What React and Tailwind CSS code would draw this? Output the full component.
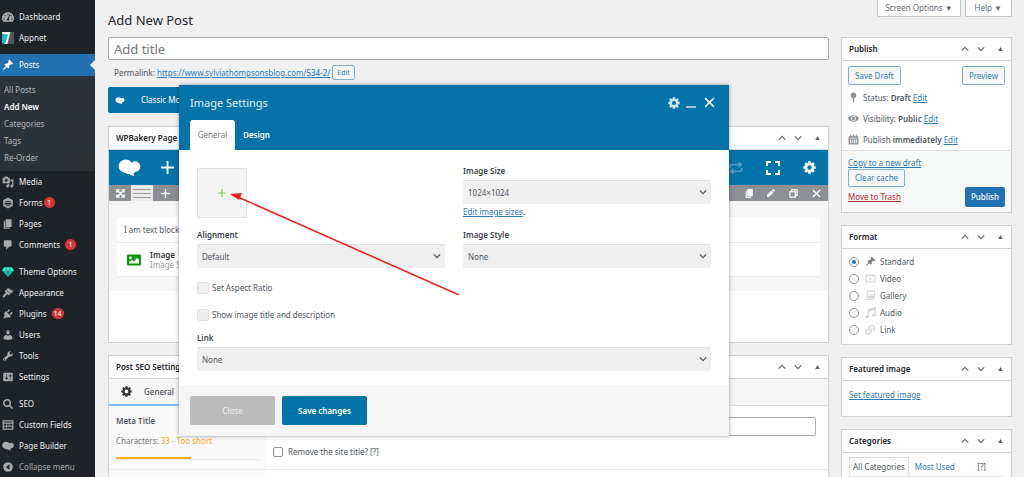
import React, { useState } from 'react';
import { FaTachometerAlt, FaLink, FaMusic, FaPen, FaSearch } from 'react-icons/fa';

const ICONS = {
  pin: 'M10.44 3.02l1.82-1.82 6.36 6.35-1.83 1.82c-1.05-.68-2.48-.57-3.41.36l-.75.75c-.92.93-1.04 2.35-.35 3.41l-1.83 1.82-2.41-2.41-2.8 2.79c-.42.42-3.38 2.71-3.8 2.29s1.86-3.39 2.28-3.81l2.79-2.79L4.1 9.36l1.83-1.82c1.05.69 2.48.57 3.4-.36l.75-.75c.93-.92 1.05-2.35.36-3.41z',
  media: 'M13 11V4c0-.55-.45-1-1-1h-1.67L9 1H5L3.67 3H2c-.55 0-1 .45-1 1v7c0 .55.45 1 1 1h10c.55 0 1-.45 1-1zM7 4.5c1.38 0 2.5 1.12 2.5 2.5S8.38 9.5 7 9.5 4.5 8.38 4.5 7 5.62 4.5 7 4.5zM14 6h5v10.5c0 1.38-1.12 2.5-2.5 2.5S14 17.88 14 16.5s1.12-2.5 2.5-2.5c.17 0 .34.02.5.05V9h-3V6zm-4 8.05V13h2v3.5c0 1.38-1.12 2.5-2.5 2.5S7 17.88 7 16.5 8.12 14 9.5 14c.17 0 .34.02.5.05z',
  forms: 'M10 1l8 4.5v9L10 19l-8-4.5v-9zM6 6.5h8L15 8H5zM4.5 9.5v3h11v-3zM6 14l1 1.5h6l1-1.5z',
  pages: 'M6 15V2h10v13H6zm-1 1h8v2H3V5h2v11z',
  comments: 'M5 2h9c1.1 0 2 .9 2 2v7c0 1.1-.9 2-2 2h-2l-5 5v-5H5c-1.1 0-2-.9-2-2V4c0-1.1.9-2 2-2z',
  appearance: 'M14.48 11.06L7.41 3.99l1.5-1.5c.5-.56 2.3-.47 3.51.32 1.21.8 1.43 1.28 2.91 2.1 1.18.64 2.45 1.26 4.45.85zm-.71.71L6.7 4.7 4.93 6.47c-.39.39-.39 1.02 0 1.41l1.06 1.06c.39.39.39 1.03 0 1.42-.6.6-1.43 1.11-2.21 1.69-.35.26-.7.53-1.01.84C1.43 14.23.4 16.08 1.4 17.07c.99 1 2.84-.03 4.18-1.36.31-.31.58-.66.85-1.02.57-.78 1.08-1.61 1.69-2.21.39-.39 1.02-.39 1.41 0l1.06 1.06c.39.39 1.02.39 1.41 0z',
  plugins: 'M13.11 4.36L9.87 7.6 8 5.73l3.24-3.24c.35-.34 1.05-.2 1.56.32.52.51.66 1.21.31 1.55zm-8 1.77l.91-1.12 9.01 9.01-1.19.84c-.71.71-2.63 1.16-3.82 1.16H6.14L4.9 17.26c-.59.59-1.54.59-2.12 0-.59-.58-.59-1.53 0-2.12L4 13.88V10.1c0-1.18.4-3.26 1.11-3.97zm7.26 3.97l3.24-3.24c.34-.35 1.04-.21 1.55.31.52.51.66 1.21.31 1.55l-3.24 3.25z',
  users: 'M10 9.25c-2.27 0-2.73-3.44-2.73-3.44C7 4.02 7.82 2 9.97 2c2.16 0 2.98 2.02 2.71 3.81 0 0-.41 3.44-2.68 3.44zm0 2.57L12.72 10c2.39 0 4.52 2.33 4.52 4.53v2.49s-3.65 1.13-7.24 1.13c-3.65 0-7.24-1.13-7.24-1.13v-2.49c0-2.25 1.94-4.48 4.47-4.48z',
  tools: 'M16.68 9.77c-1.34 1.34-3.3 1.67-4.95.99l-5.41 6.52c-.99.99-2.59.99-3.58 0s-.99-2.59 0-3.57l6.52-5.42c-.68-1.65-.35-3.61.99-4.95 1.28-1.28 3.12-1.62 4.72-1.06l-2.89 2.89 2.82 2.82 2.86-2.87c.53 1.58.18 3.39-1.08 4.65zM3.81 16.21c.4.39 1.04.39 1.43 0 .4-.4.4-1.04 0-1.43-.39-.4-1.03-.4-1.43 0-.39.39-.39 1.03 0 1.43z',
  settings: 'M18 16V4c0-.55-.45-1-1-1H3c-.55 0-1 .45-1 1v12c0 .55.45 1 1 1h14c.55 0 1-.45 1-1zM8 11h1c.55 0 1 .45 1 1s-.45 1-1 1H8v1.5c0 .28-.22.5-.5.5s-.5-.22-.5-.5V13H6c-.55 0-1-.45-1-1s.45-1 1-1h1V5.5c0-.28.22-.5.5-.5s.5.22.5.5V11zm5-2h-1c-.55 0-1-.45-1-1s.45-1 1-1h1V5.5c0-.28.22-.5.5-.5s.5.22.5.5V7h1c.55 0 1 .45 1 1s-.45 1-1 1h-1v5.5c0 .28-.22.5-.5.5s-.5-.22-.5-.5V9z',
  fields: 'M1 2h18v16H1zM3 4v2h14V4zM3 8v3h4V8zM8 8v3h4V8zM13 8v3h4V8zM3 13v3h4v-3zM8 13v3h9v-3z',
  collapse: 'M10 2a8 8 0 1 0 0 16 8 8 0 0 0 0-16zM12.5 5.5v9L6.5 10z',
  video: 'M1 3h18v14H1zM3 6v9h14V6zM8 7.5l5 3-5 3z',
  gallery: 'M4 1h14v14H4zM6 3v8h10V3zM2 5h1v11h13v2H2zM7 10l2-4 2 2 2-1 2 3z',
  eye: 'M10 4C5 4 2 7 0 10c2 3 5 6 10 6s8-3 10-6c-2-3-5-6-10-6zM10 5.5a4.5 4.5 0 1 1 0 9 4.5 4.5 0 0 1 0-9zM10 7a3 3 0 1 0 0 6 3 3 0 0 0 0-6z',
  calendar: 'M1 4h3V1h2v3h3V1h2v3h3V1h2v3h3v15H1zM3 7v1h14V7zM4 10v7h2v-7zM8 10v7h1.5v-7zM11 10v7h1.5v-7zM14 10v7h2v-7z',
  marker: 'M10 1a5 5 0 0 1 1.5 9.8L11 19H9l-.5-8.2A5 5 0 0 1 10 1z',
  image: 'M2 2h16a2 2 0 0 1 2 2v12a2 2 0 0 1-2 2H2a2 2 0 0 1-2-2V4a2 2 0 0 1 2-2zM5 5a2 2 0 1 0 0 4 2 2 0 0 0 0-4zM3 15h14V9l-3-2-4 5-3-2-4 3z',
};

const Icon = ({ name, className = 'size-3' }) => (
  <svg viewBox="0 0 20 20" fill="currentColor" fillRule="evenodd" className={`shrink-0 ${className}`} aria-hidden="true">
    <path d={ICONS[name]} />
  </svg>
);

const Gear = ({ className }) => (
  <svg viewBox="0 0 20 20" fill="none" stroke="currentColor" className={className} aria-hidden="true">
    <circle cx="10" cy="10" r="5.5" strokeWidth="4" />
    {[0, 45, 90, 135].map(a => (
      <path key={a} d="M10 .5v3M10 16.5v3" strokeWidth="4" transform={`rotate(${a} 10 10)`} />
    ))}
  </svg>
);

const Cloud = ({ className }) => (
  <svg viewBox="0 0 24 18" fill="currentColor" className={`shrink-0 ${className}`} aria-hidden="true">
    <ellipse cx="8" cy="7.5" rx="7.5" ry="7" />
    <circle cx="18" cy="8" r="5.5" />
    <path d="M5 12h14c-1 2.5-2 3.5-3 3.5l1 2.5c-2 0-4-1-5-2-3 .5-6-1-7-4z" />
  </svg>
);

const Gem = () => (
  <svg viewBox="0 0 24 20" className="h-3 w-3 shrink-0" aria-hidden="true">
    <path fill="#1abc9c" d="M5 0h14l5 7-12 13L0 7z" />
    <path fill="#3fe0c5" d="M5 0l3 7H0zM12 0l4 7H8zM19 0l5 7h-8z" />
    <path fill="#12a085" d="M8 7h8l-4 13z" />
  </svg>
);

const AppnetLogo = () => (
  <svg viewBox="0 0 20 20" className="size-3 shrink-0" aria-hidden="true">
    <path fill="#50575e" d="M8 0h12v20H8z" />
    <path fill="#fff" d="M0 0h14L9 20H4z" />
    <path fill="#22b8c0" d="M0 3l10 1-4 14-6 2z" />
  </svg>
);

const Chevron = ({ up, className = 'size-2' }) => (
  <svg viewBox="0 0 10 10" fill="none" stroke="currentColor" strokeWidth="1.6" className={`shrink-0 ${className}`} aria-hidden="true">
    <path d={up ? 'M1 7l4-4 4 4' : 'M1 3l4 4 4-4'} />
  </svg>
);

const Plus = ({ className }) => (
  <svg viewBox="0 0 14 14" stroke="currentColor" className={className} aria-hidden="true">
    <path d="M7 0v14M0 7h14" strokeWidth="2" />
  </svg>
);

const Cross = ({ className }) => (
  <svg viewBox="0 0 10 10" stroke="currentColor" strokeWidth="1.6" className={className} aria-hidden="true">
    <path d="M1 1l8 8M9 1l-8 8" />
  </svg>
);

const MENU = [
  [
    { label: 'Dashboard', icon: <FaTachometerAlt className="size-3 shrink-0" /> },
    { label: 'Appnet', icon: <AppnetLogo /> },
  ],
  [
    { label: 'Media', icon: <Icon name="media" /> },
    { label: 'Forms', icon: <Icon name="forms" />, count: 1, tight: true },
    { label: 'Pages', icon: <Icon name="pages" /> },
    { label: 'Comments', icon: <Icon name="comments" />, count: 1 },
  ],
  [
    { label: 'Theme Options', icon: <Gem /> },
    { label: 'Appearance', icon: <Icon name="appearance" /> },
    { label: 'Plugins', icon: <Icon name="plugins" />, count: 14 },
    { label: 'Users', icon: <Icon name="users" /> },
    { label: 'Tools', icon: <Icon name="tools" /> },
    { label: 'Settings', icon: <Icon name="settings" /> },
  ],
  [
    { label: 'SEO', icon: <FaSearch className="mx-px size-[10px] shrink-0" /> },
    { label: 'Custom Fields', icon: <Icon name="fields" /> },
    { label: 'Page Builder', icon: <Cloud className="h-[10px] w-3" /> },
  ],
];

const SUBMENU = ['All Posts', 'Add New', 'Categories', 'Tags', 'Re-Order'];

const MenuGroup = ({ items }) => items.map(item => (
  <li key={item.label}>
    <a href="#" className="flex h-[21px] items-center gap-[5px] pl-[2px] text-[#f0f0f1]">
      <span className="flex text-[#a7aaad]">{item.icon}</span>
      {item.label}
      {item.count && (
        <span className={`flex h-[11px] min-w-[11px] items-center justify-center rounded-full bg-[#d63638] px-[2px] text-[7px] leading-none text-white ${item.tight ? '-ml-1' : ''}`}>
          {item.count}
        </span>
      )}
    </a>
  </li>
));

const Sidebar = () => (
  <nav className="w-[95px] shrink-0 bg-[#1d2327] pt-[6px] leading-3">
    <ul><MenuGroup items={MENU[0]} /></ul>
    <a href="#" className="mt-[6px] flex h-[22px] items-center gap-[5px] bg-[#2271b1] pl-[2px] text-white">
      <Icon name="pin" />
      Posts
      <svg viewBox="0 0 5 10" className="ml-auto h-[10px] w-[5px]" aria-hidden="true"><path d="M5 0L0 5l5 5z" fill="#f0f0f1" /></svg>
    </a>
    <ul className="bg-[#2c3338] py-[5px]">
      {SUBMENU.map(s => (
        <li key={s}>
          <a href="#" className={`flex h-[17px] items-center pl-1 ${s === 'Add New' ? 'font-semibold text-white' : 'text-[#b4b9be]'}`}>{s}</a>
        </li>
      ))}
    </ul>
    <ul><MenuGroup items={MENU[1]} /></ul>
    <ul className="mt-[6px]"><MenuGroup items={MENU[2]} /></ul>
    <ul className="mt-[6px]"><MenuGroup items={MENU[3]} /></ul>
    <button type="button" className="flex h-[21px] items-center gap-[5px] pl-[2px] text-[#a7aaad]">
      <Icon name="collapse" />
      Collapse menu
    </button>
  </nav>
);

const Panel = ({ title, children, className = '' }) => (
  <section className={`border border-[#d0d1d4] bg-white ${className}`}>
    <header className="flex h-[23px] items-center border-b border-[#d0d1d4] pr-2 pl-[7px] text-[#646970]">
      <h2 className="flex-1 truncate font-semibold text-[#1d2327]">{title}</h2>
      <button type="button" aria-label="Move up" className="mr-2"><Chevron up /></button>
      <button type="button" aria-label="Move down" className="mr-[13px]"><Chevron /></button>
      <button type="button" aria-label="Toggle panel">
        <svg viewBox="0 0 6 5" className="h-1 w-[5px]" fill="currentColor"><path d="M3 0l3 5H0z" /></svg>
      </button>
    </header>
    {children}
  </section>
);

const Link = ({ children, className = 'text-[#2f7cba]' }) => (
  <a href="#" className={`underline ${className}`}>{children}</a>
);

const OutlineButton = ({ children, className = 'h-[19px] px-[6px]' }) => (
  <button type="button" className={`rounded-[2px] border border-[#7eaed6] bg-[#f6f7f7] text-[#2f7cba] ${className}`}>{children}</button>
);

const BuilderPanel = () => (
  <Panel title="WPBakery Page Builder" className="mt-[13px]">
    <div className="flex h-[35px] items-center bg-[#0473aa] pr-3 pl-[9px] text-white">
      <Cloud className="h-[17px] w-[23px]" />
      <button type="button" aria-label="Add element" className="ml-5"><Plus className="size-[13px]" /></button>
      <button type="button" aria-label="Redo" className="ml-auto text-[#4c9cc5]">
        <svg viewBox="0 0 16 14" className="h-3 w-[14px]" fill="none" stroke="currentColor" strokeWidth="2">
          <path d="M1 7V6a3 3 0 0 1 3-3h10M11 0l3 3-3 3M15 7v1a3 3 0 0 1-3 3H2M5 8l-3 3 3 3" />
        </svg>
      </button>
      <button type="button" aria-label="Full screen" className="ml-[23px]">
        <svg viewBox="0 0 14 14" className="size-[14px]" fill="none" stroke="currentColor" strokeWidth="2">
          <path d="M1 5V1h4M9 1h4v4M13 9v4H9M5 13H1V9" />
        </svg>
      </button>
      <button type="button" aria-label="Page settings" className="ml-[23px]"><Gear className="size-[13px]" /></button>
    </div>
    <div className="flex h-4 items-center bg-[#8c8f94] pr-[7px] text-white">
      <button type="button" aria-label="Move row" className="flex w-[22px] justify-center">
        <svg viewBox="0 0 10 10" className="size-[9px]" fill="none" stroke="currentColor" strokeWidth="1.6">
          <path d="M1 1l8 8M9 1L1 9M1 4V1h3M6 1h3v3M9 6v3H6M4 9H1V6" />
        </svg>
      </button>
      <button type="button" aria-label="Row layout" className="flex h-4 w-[22px] items-center justify-center bg-[#ebebeb] text-[#999]">
        <svg viewBox="0 0 18 9" className="h-[9px] w-[18px]" stroke="currentColor"><path d="M0 .5h18M0 4.5h18M0 8.5h18" /></svg>
      </button>
      <button type="button" aria-label="Add column" className="flex w-6 justify-center"><Plus className="size-[9px]" /></button>
      <button type="button" aria-label="Copy" className="ml-auto"><Icon name="pages" className="size-[11px]" /></button>
      <button type="button" aria-label="Edit" className="ml-3"><FaPen className="size-2" /></button>
      <button type="button" aria-label="Clone" className="ml-[14px]">
        <svg viewBox="0 0 10 10" className="size-[9px]" fill="none" stroke="currentColor" strokeWidth="1.4"><path d="M3 3V1h6v6H7M1 3h6v6H1z" /></svg>
      </button>
      <button type="button" aria-label="Delete" className="ml-[14px]"><Cross className="size-[9px]" /></button>
    </div>
    <div className="bg-[#f5f5f5] px-2 pt-4 pb-[14px]">
      <div className="h-[26px] border-b border-[#ebebeb] bg-white px-[7px] leading-[26px] text-[#50575e]">I am text block.</div>
      <div className="flex h-[34px] items-center gap-[9px] border-b border-[#ebebeb] bg-white px-[10px] leading-[10px]">
        <Icon name="image" className="size-[14px] text-[#0a9a0a]" />
        <div>
          <h3 className="font-semibold text-[#333]">Image</h3>
          <p className="text-[#999]">Image Size: 1024×1024</p>
        </div>
      </div>
    </div>
    <div className="h-[51px]" />
  </Panel>
);

const SeoPanel = () => (
  <Panel title="Post SEO Settings" className="mt-3">
    <div className="flex h-[27px] border-b border-[#dcdcde] bg-[#f5f5f5]">
      <button type="button" className="flex h-[27px] w-[158px] items-center gap-3 border-b-2 border-[#82b8f0] pl-3 font-medium text-[#50575e]">
        <Gear className="size-[11px] text-[#2c3338]" />
        General
      </button>
    </div>
    <div className="flex">
      <div className="w-[157px] shrink-0 bg-[#f9f9f9]">
        <div className="h-16 border-b border-[#ebebeb] px-[7px] pt-[9px]">
          <h3 className="font-semibold text-[#50575e]">Meta Title</h3>
          <p className="mt-2 text-[#72777c]">Characters: <span className="text-[#ffa726]">33 - Too short</span></p>
          <div className="mt-[10px] border-b border-[#e5e5e5]">
            <div className="h-[2px] w-[75px] bg-[#f9ae1c]" />
          </div>
        </div>
        <div className="h-6" />
      </div>
      <div className="flex-1">
        <div className="h-16 border-b border-[#ebebeb] pt-[11px] pr-3 pl-[7px]">
          <input type="text" aria-label="Meta title" className="block h-[19px] w-full rounded-[2px] border border-[#a7aaad]" />
          <label className="mt-[10px] flex items-center gap-[5px] text-[#50575e]">
            <input type="checkbox" className="size-[10px] appearance-none rounded-[2px] border border-[#8c8f94]" />
            Remove the site title? [?]
          </label>
        </div>
      </div>
    </div>
  </Panel>
);

const FORMATS = [
  { label: 'Standard', icon: <Icon name="pin" className="size-[11px] text-[#787c82]" /> },
  { label: 'Video', icon: <Icon name="video" className="size-[11px]" /> },
  { label: 'Gallery', icon: <Icon name="gallery" className="size-[11px]" /> },
  { label: 'Audio', icon: <FaMusic className="size-[11px]" /> },
  { label: 'Link', icon: <FaLink className="size-[10px]" /> },
];

const SideColumn = () => {
  const [format, setFormat] = useState('Standard');

  return (
    <aside className="w-[171px] shrink-0 text-[#50575e]">
      <Panel title="Publish">
        <div className="flex justify-between px-[6px] pt-[5px]">
          <OutlineButton>Save Draft</OutlineButton>
          <OutlineButton>Preview</OutlineButton>
        </div>
        <div className="px-[6px] pt-[2px]">
          <p className="flex h-[21px] items-center gap-1"><Icon name="marker" className="size-[11px] text-[#8c8f94]" /><span>Status: <b className="font-semibold">Draft</b> <Link>Edit</Link></span></p>
          <p className="flex h-[21px] items-center gap-1"><Icon name="eye" className="size-[11px] text-[#8c8f94]" /><span>Visibility: <b className="font-semibold">Public</b> <Link>Edit</Link></span></p>
          <p className="flex h-[21px] items-center gap-1"><Icon name="calendar" className="size-[11px] text-[#8c8f94]" /><span>Publish <b className="font-semibold">immediately</b> <Link>Edit</Link></span></p>
        </div>
        <div className="border-t border-[#dcdcde] bg-[#f6f7f7] px-[6px] pt-[6px] pb-[5px]">
          <div><Link>Copy to a new draft</Link></div>
          <OutlineButton className="block h-[18px] px-[6px]">Clear cache</OutlineButton>
          <div className="flex items-center justify-between">
            <Link className="text-[#b32d2e]">Move to Trash</Link>
            <button type="button" className="h-5 rounded-[2px] bg-[#2271b1] px-[6px] font-medium text-white">Publish</button>
          </div>
        </div>
      </Panel>
      <Panel title="Format" className="mt-3">
        <fieldset aria-label="Post formats" className="px-[7px] pt-1 pb-[6px]">
          {FORMATS.map(f => (
            <label key={f.label} className="flex h-[17px] items-center">
              <input
                type="radio"
                name="format"
                checked={format === f.label}
                onChange={() => setFormat(f.label)}
                className="size-[10px] appearance-none rounded-full border border-[#8c8f94] bg-white bg-clip-content p-[2px] checked:bg-[#2271b1]"
              />
              <span className="ml-[5px] flex w-3 justify-center text-[#d5d6d9]">{f.icon}</span>
              <span className="ml-1">{f.label}</span>
            </label>
          ))}
        </fieldset>
      </Panel>
      <Panel title="Featured image" className="mt-3">
        <p className="h-[35px] px-[7px] pt-[8px]"><Link>Set featured image</Link></p>
      </Panel>
      <Panel title="Categories" className="mt-3">
        <div className="px-[7px] pt-1">
          <div className="flex h-[19px] items-center">
            <button type="button" className="h-[19px] border border-b-0 border-[#dcdcde] px-[3px]">All Categories</button>
            <button type="button" className="ml-[6px] text-[#2f7cba]">Most Used</button>
            <span className="mr-[18px] ml-auto">[?]</span>
          </div>
          <div className="flex h-20 justify-end border border-[#dcdcde]"><div className="w-[10px] bg-[#f0f0f1]" /></div>
        </div>
      </Panel>
    </aside>
  );
};

const Field = ({ id, label, value, className = '' }) => (
  <div className={className}>
    <label htmlFor={id} className="block font-semibold text-[#3c434a]">{label}</label>
    <div className="mt-[3px] grid items-center">
      <select id={id} className="col-start-1 row-start-1 h-6 w-full appearance-none rounded-[2px] border-t border-[#dedede] bg-[#efefef] px-[5px] text-[#50575e]">
        <option>{value}</option>
      </select>
      <Chevron className="pointer-events-none col-start-1 row-start-1 mr-1 size-2 justify-self-end text-[#50575e]" />
    </div>
  </div>
);

const Check = ({ label, className = '' }) => (
  <label className={`flex items-center gap-[3px] text-[#50575e] ${className}`}>
    <input type="checkbox" className="size-3 appearance-none rounded-[2px] border border-[#e2e2e2] bg-[#efefef]" />
    {label}
  </label>
);

const ImageDialog = () => (
  <div role="dialog" aria-label="Image Settings" className="absolute top-[85px] left-[179px] w-[550px] bg-white shadow-[0_0_4px_rgba(0,0,0,0.4)]">
    <header className="bg-[#0473aa] px-[11px] text-white">
      <div className="flex h-[35px] items-center pr-[3px]">
        <h2 className="flex-1 text-[11px] text-[#e6f1f7]">Image Settings</h2>
        <button type="button" aria-label="Dialog settings" className="text-[#cfe4ef]"><Gear className="size-3" /></button>
        <button type="button" aria-label="Minimize" className="ml-[6px] flex h-[11px] w-[10px] items-end"><span className="h-[2px] w-full bg-[#9cc8de]" /></button>
        <button type="button" aria-label="Close dialog" className="ml-2 text-[#e6f1f7]"><Cross className="size-[11px]" /></button>
      </div>
      <div className="flex h-[30px]" role="tablist">
        <button type="button" role="tab" aria-selected="true" className="w-[45px] rounded-t-[3px] bg-white text-[#72777c]">General</button>
        <button type="button" role="tab" aria-selected="false" className="px-2 font-semibold">Design</button>
      </div>
    </header>
    <div className="grid grid-cols-2 gap-x-[18px] px-[18px] pb-[14px] pt-[15px]">
      <div className="pt-[3px]">
        <button type="button" aria-label="Add image" className="flex size-[50px] items-center justify-center border border-[#e3e3e3] bg-[#f4f4f4] text-[#84cf55]">
          <Plus className="size-2" />
        </button>
      </div>
      <div>
        <Field id="image-size" label="Image Size" value="1024×1024" />
        <p className="mt-[2px]"><Link>Edit image sizes</Link>.</p>
      </div>
      <Field id="alignment" label="Alignment" value="Default" className="mt-[11px]" />
      <Field id="image-style" label="Image Style" value="None" className="mt-[11px]" />
      <Check label="Set Aspect Ratio" className="col-span-2 mt-[14px]" />
      <Check label="Show image title and description" className="col-span-2 mt-[15px]" />
      <Field id="image-link" label="Link" value="None" className="col-span-2 mt-[11px]" />
    </div>
    <footer className="flex gap-[7px] bg-[#f5f5f5] px-[11px] py-[11px]">
      <button type="button" className="h-[29px] w-[85px] rounded-[2px] bg-[#bbb] text-[#f0f0f0]">Close</button>
      <button type="button" className="h-[29px] w-[85px] rounded-[2px] bg-[#0473aa] font-semibold text-white">Save changes</button>
    </footer>
  </div>
);

const Arrow = () => (
  <svg viewBox="0 0 230 102" className="pointer-events-none absolute top-[193px] left-[230px] h-[102px] w-[230px]" aria-hidden="true">
    <path d="M8 4l221 98" stroke="#ee1c1c" strokeWidth="1.5" />
    <path d="M0 1l12-1-3 7z" fill="#ee1c1c" />
  </svg>
);

const App = () => (
  <div className="relative flex h-screen overflow-hidden bg-[#f0f0f1] font-['Noto_Sans','Open_Sans',sans-serif] text-[8px] leading-3">
    <Sidebar />
    <div className="flex min-w-0 flex-1 flex-col pr-3 pl-[13px]">
      <div className="flex h-[37px] shrink-0 justify-between">
        <h1 className="pt-3 text-[13px] leading-4 text-[#1d2327]">Add New Post</h1>
        <div className="flex gap-1 text-[#646970]">
          <button type="button" className="h-[17px] rounded-b-[2px] border border-t-0 border-[#c3c4c7] bg-white px-[7px]">Screen Options ▼</button>
          <button type="button" className="h-[17px] rounded-b-[2px] border border-t-0 border-[#c3c4c7] bg-white px-[9px]">Help ▼</button>
        </div>
      </div>
      <div className="flex items-start gap-3">
        <main className="min-w-0 flex-1">
          <input type="text" aria-label="Add title" placeholder="Add title" className="block h-[23px] w-full rounded-[2px] border border-[#a7aaad] bg-white px-[5px] text-[13px] placeholder:text-[#72777c]" />
          <div className="mt-[5px] flex items-center gap-[2px] pl-[6px] text-[#646970]">
            <span className="font-medium">Permalink:</span>
            <Link>https://www.sylviathompsonsblog.com/<b className="font-medium">534-2/</b></Link>
            <OutlineButton className="h-[15px] px-1 text-[7px]">Edit</OutlineButton>
          </div>
          <div className="mt-[7px] flex h-[26px] w-[200px] items-center gap-4 rounded-[2px] bg-[#0473aa] pl-[7px] text-white">
            <Cloud className="h-[7px] w-[10px]" />
            <button type="button">Classic Mode</button>
          </div>
          <BuilderPanel />
          <SeoPanel />
        </main>
        <SideColumn />
      </div>
    </div>
    <ImageDialog />
    <Arrow />
  </div>
);

export default App;
